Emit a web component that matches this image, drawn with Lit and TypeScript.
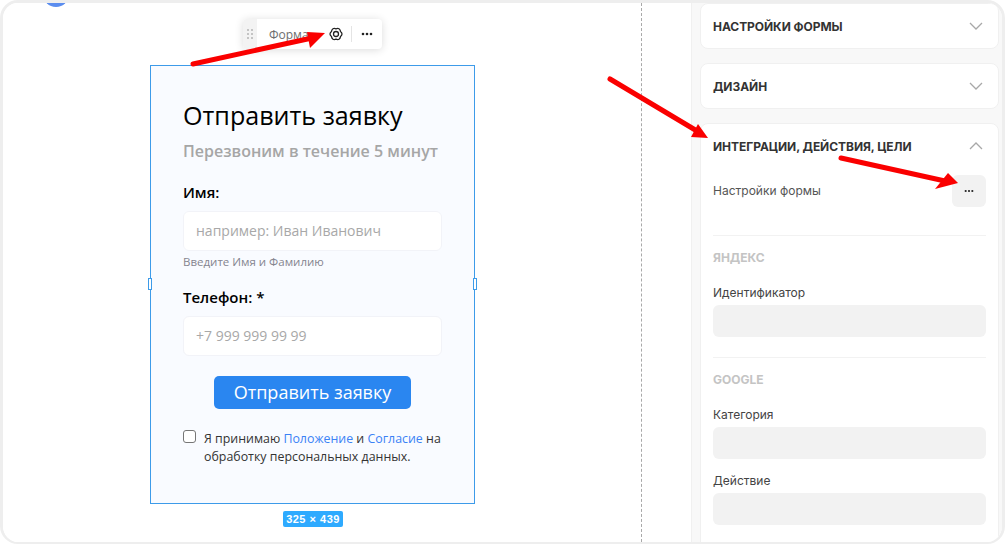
import { html, LitElement, css, svg } from "lit";
import { customElement } from "lit/decorators.js";

const dots = svg`<svg class="dots" viewBox="0 0 12 4" width="12" height="4" aria-hidden="true"><circle cx="2" cy="2" r="1.3"/><circle cx="6" cy="2" r="1.3"/><circle cx="10" cy="2" r="1.3"/></svg>`;
const chevronDown = svg`<svg class="chev" viewBox="0 0 14 8" width="14" height="8" aria-hidden="true"><path d="M1 1l6 6 6-6"/></svg>`;
const chevronUp = svg`<svg class="chev" viewBox="0 0 14 8" width="14" height="8" aria-hidden="true"><path d="M1 7l6-6 6 6"/></svg>`;
const gear = svg`<svg class="gear" viewBox="0 0 16 16" width="16" height="16" aria-hidden="true"><path d="M8 2.8Q11.75 1.5 12.5 5.4 15.5 8 12.5 10.6 11.75 14.5 8 13.2 4.25 14.5 3.5 10.6 .5 8 3.5 5.4 4.25 1.5 8 2.8z"/><circle cx="8" cy="8" r="2.5"/></svg>`;

@customElement("app-root")
export class AppRoot extends LitElement {
  static styles = css`
    :host {
      display: block;
      position: relative;
      width: 1005px;
      height: 544px;
      overflow: hidden;
      background: #fff;
    }
    .frame {
      box-sizing: border-box;
      display: flex;
      height: 544px;
      border: 3px solid #eeeeee;
      border-bottom-width: 2px;
      border-radius: 18px;
      overflow: hidden;
    }
    .canvas {
      flex: none;
      box-sizing: border-box;
      width: 688px;
      height: 100%;
      padding: 16px 0 0 147px;
      position: relative;
      background: #fff;
    }
    .avatar {
      position: absolute;
      left: 40px;
      top: -22px;
      width: 26px;
      height: 26px;
      border-radius: 50%;
      background: #5b8def;
    }
    .guide {
      position: absolute;
      left: 638px;
      top: 0;
      bottom: 0;
      border-left: 1px dashed #a9a9a9;
    }
    .toolbar {
      display: flex;
      align-items: center;
      width: 139px;
      height: 30px;
      margin-left: 93px;
      border-radius: 4px;
      background: #fff;
      box-shadow: 0 1px 8px rgba(0, 0, 0, 0.14);
      font: 12px "Open Sans", sans-serif;
      color: #6e6e6e;
    }
    .grip {
      width: 14px;
      height: 30px;
      border-radius: 4px 0 0 4px;
      background: #f3f3f3;
      display: flex;
      align-items: center;
      justify-content: center;
    }
    .grip svg {
      fill: #c4c4c4;
    }
    .toolbar .name {
      margin-left: 12px;
      width: 59px;
    }
    .gear {
      fill: none;
      stroke: #222;
      stroke-width: 1.3;
      stroke-linejoin: round;
    }
    .sep {
      width: 1px;
      height: 16px;
      margin: 0 9px 0 7px;
      background: #e4e4e4;
    }
    .dots {
      fill: #222;
    }
    .form {
      box-sizing: border-box;
      position: relative;
      width: 325px;
      height: 439px;
      margin-top: 16px;
      padding: 33px 32px 0;
      border: 1px solid #3d9be9;
      background: #f9fbff;
      font-family: "Open Sans", sans-serif;
      color: #000;
    }
    .handle {
      position: absolute;
      top: 212px;
      width: 2px;
      height: 10px;
      border: 1px solid #3d9be9;
      background: #fff;
    }
    .handle.l {
      left: -3px;
    }
    .handle.r {
      right: -3px;
    }
    .size {
      position: absolute;
      left: 132px;
      bottom: -24px;
      width: 60px;
      height: 16px;
      border-radius: 2px;
      background: #2eaaff;
      color: #fff;
      font: bold 11px/16px "Liberation Sans", sans-serif;
      letter-spacing: 0.5px;
      text-align: center;
      white-space: nowrap;
    }
    h1 {
      margin: 0;
      font-size: 25.1px;
      line-height: 33px;
      font-weight: 400;
    }
    .sub {
      margin-top: 8px;
      font-size: 16px;
      line-height: 22px;
      font-weight: 600;
      color: #a6a6a6;
    }
    .label {
      font-size: 15px;
      line-height: 20px;
      font-weight: 600;
      color: #000;
    }
    .label.name-label {
      margin-top: 20px;
    }
    .label.phone-label {
      margin-top: 18px;
    }
    .field {
      box-sizing: border-box;
      width: 259px;
      height: 40px;
      margin-top: 9px;
      padding-left: 12px;
      border: 1px solid #f2f3f8;
      border-radius: 6px;
      background: #fff;
      font-size: 14px;
      line-height: 38px;
      color: #a8a8a8;
    }
    .hint {
      margin-top: 3px;
      font-size: 11.5px;
      line-height: 15px;
      color: #85858f;
    }
    .submit {
      width: 197px;
      height: 33px;
      margin: 20px 0 0 31px;
      border-radius: 5px;
      background: #2a86f0;
      color: #fff;
      font-size: 18px;
      line-height: 33px;
      text-align: center;
    }
    .agree {
      display: flex;
      gap: 8px;
      margin-top: 21px;
      font-size: 12.4px;
      line-height: 18px;
      color: #333;
    }
    .check {
      flex: none;
      box-sizing: border-box;
      width: 13px;
      height: 13px;
      border: 1px solid #767676;
      border-radius: 3px;
      background: #fff;
    }
    .agree-text {
      margin-right: -6px;
    }
    .agree span {
      color: #3b82f6;
    }
    .side {
      flex: 1;
      min-width: 0;
      box-sizing: border-box;
      padding-left: 8px;
      padding-right: 3px;
      display: flex;
      flex-direction: column;
      gap: 14px;
      background: #f8f8f8;
      border-left: 1px solid #f0f0f0;
      font-family: Inter, sans-serif;
    }
    .card {
      flex: none;
      box-sizing: border-box;
      background: #fff;
      border: 1px solid #f0f0f0;
      border-radius: 8px;
      padding: 0 12px;
    }
    .card.open {
      padding-bottom: 30px;
    }
    .head {
      display: flex;
      align-items: center;
      justify-content: space-between;
      height: 44px;
      font-size: 12px;
      font-weight: 700;
      letter-spacing: -0.05px;
      color: #333;
      padding-right: 3px;
    }
    .chev {
      fill: none;
      stroke: #a8a8a8;
      stroke-width: 1.3;
    }
    .row {
      display: flex;
      align-items: center;
      justify-content: space-between;
      margin-top: 7px;
      font-size: 12px;
      color: #555;
    }
    .row-label {
      padding-bottom: 2px;
    }
    .more {
      width: 34px;
      height: 32px;
      border-radius: 6px;
      background: #f2f2f2;
      display: flex;
      align-items: center;
      justify-content: center;
    }
    .more .dots {
      width: 10px;
    }
    hr {
      margin: 28px 0 0;
      border: 0;
      border-top: 1px solid #f2f2f2;
    }
    hr.next {
      margin-top: 20px;
    }
    .group {
      margin-top: 14px;
      font-size: 12px;
      line-height: 15px;
      font-weight: 700;
      color: #c4c4c4;
    }
    .flabel {
      margin-top: 20px;
      font-size: 12px;
      line-height: 15px;
      color: #444;
    }
    .flabel.tight {
      margin-top: 14px;
    }
    .box {
      height: 32px;
      margin-top: 5px;
      border-radius: 6px;
      background: #f2f2f2;
    }
    .arrows {
      position: absolute;
      inset: 0;
      pointer-events: none;
    }
    .arrows line {
      stroke: #fa0000;
      stroke-width: 5;
      stroke-linecap: round;
    }
    .arrows polygon {
      fill: #fa0000;
    }
  `;

  render() {
    return html`<div class="frame">
        <div class="canvas">
          <div class="avatar"></div>
          <div class="guide"></div>
          <div class="toolbar">
            <div class="grip">
              <svg viewBox="0 0 6 10" width="6" height="10" aria-hidden="true">
                <rect x="0" y="0" width="2" height="2" /><rect x="4" y="0" width="2" height="2" />
                <rect x="0" y="4" width="2" height="2" /><rect x="4" y="4" width="2" height="2" />
                <rect x="0" y="8" width="2" height="2" /><rect x="4" y="8" width="2" height="2" />
              </svg>
            </div>
            <div class="name">Форма</div>
            ${gear}
            <div class="sep"></div>
            ${dots}
          </div>
          <div class="form">
            <div class="handle l"></div>
            <div class="handle r"></div>
            <h1>Отправить заявку</h1>
            <div class="sub">Перезвоним в течение 5 минут</div>
            <div class="label name-label">Имя:</div>
            <div class="field">например: Иван Иванович</div>
            <div class="hint">Введите Имя и Фамилию</div>
            <div class="label phone-label">Телефон: *</div>
            <div class="field">+7 999 999 99 99</div>
            <div class="submit">Отправить заявку</div>
            <div class="agree">
              <div class="check"></div>
              <div class="agree-text">Я принимаю <span>Положение</span> и <span>Согласие</span> на обработку персональных данных.</div>
            </div>
            <div class="size">325 × 439</div>
          </div>
        </div>
        <div class="side">
          <div class="card"><div class="head">НАСТРОЙКИ ФОРМЫ ${chevronDown}</div></div>
          <div class="card"><div class="head">ДИЗАЙН ${chevronDown}</div></div>
          <div class="card open">
            <div class="head">ИНТЕГРАЦИИ, ДЕЙСТВИЯ, ЦЕЛИ ${chevronUp}</div>
            <div class="row"><div class="row-label">Настройки формы</div> <div class="more">${dots}</div></div>
            <hr />
            <div class="group">ЯНДЕКС</div>
            <div class="flabel">Идентификатор</div>
            <div class="box"></div>
            <hr class="next" />
            <div class="group">GOOGLE</div>
            <div class="flabel">Категория</div>
            <div class="box"></div>
            <div class="flabel tight">Действие</div>
            <div class="box"></div>
          </div>
        </div>
      </div>
      <svg class="arrows" width="1005" height="544" aria-hidden="true">
        <line x1="193" y1="64" x2="312" y2="38" />
        <polygon points="325,33 307,32 310,48" />
        <line x1="610" y1="79" x2="697" y2="131" />
        <polygon points="708,138 698,124 691,137" />
        <line x1="841" y1="158" x2="945" y2="181" />
        <polygon points="958,183 948,173 935,189" />
      </svg>`;
  }
}

declare global {
  interface HTMLElementTagNameMap {
    "app-root": AppRoot;
  }
}
